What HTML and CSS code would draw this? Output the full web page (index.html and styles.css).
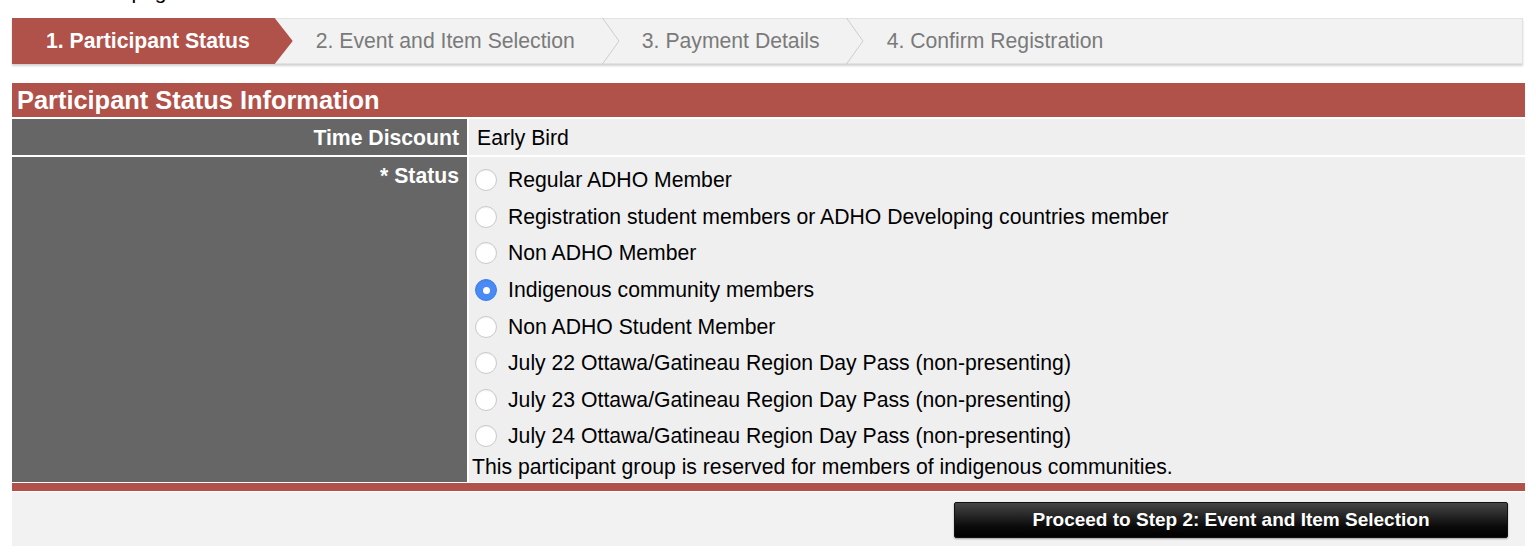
FILE: index.html
```html
<!DOCTYPE html>
<html>
<head>
<meta charset="utf-8">
<link rel="stylesheet" href="styles.css">
</head>
<body>
<div class="pretext"><div class="pretext-inner">this page</div></div>
<div class="wrap">
  <nav class="steps">
    <div class="step active">1. Participant Status</div>
    <div class="step s2">2. Event and Item Selection</div>
    <svg class="chev" viewBox="0 0 18 46" preserveAspectRatio="none"><polyline points="0.5,0 17,23 0.5,46" fill="none" stroke="#cdcdcd" stroke-width="1"/></svg>
    <div class="step s3">3. Payment Details</div>
    <svg class="chev" viewBox="0 0 18 46" preserveAspectRatio="none"><polyline points="0.5,0 17,23 0.5,46" fill="none" stroke="#cdcdcd" stroke-width="1"/></svg>
    <div class="step s4">4. Confirm Registration</div>
  </nav>

  <h2 class="section-title">Participant Status Information</h2>
  <div class="form">
    <div class="label">Time Discount</div>
    <div class="value">Early Bird</div>
    <div class="label label-top">* Status</div>
    <div class="value options">
      <label class="opt"><input type="radio" name="status"><span>Regular ADHO Member</span></label>
      <label class="opt"><input type="radio" name="status"><span>Registration student members or ADHO Developing countries member</span></label>
      <label class="opt"><input type="radio" name="status"><span>Non ADHO Member</span></label>
      <label class="opt"><input type="radio" name="status" checked><span>Indigenous community members</span></label>
      <label class="opt"><input type="radio" name="status"><span>Non ADHO Student Member</span></label>
      <label class="opt"><input type="radio" name="status"><span>July 22 Ottawa/Gatineau Region Day Pass (non-presenting)</span></label>
      <label class="opt"><input type="radio" name="status"><span>July 23 Ottawa/Gatineau Region Day Pass (non-presenting)</span></label>
      <label class="opt"><input type="radio" name="status"><span>July 24 Ottawa/Gatineau Region Day Pass (non-presenting)</span></label>
      <div class="note">This participant group is reserved for members of indigenous communities.</div>
    </div>
  </div>
  <div class="redbar"></div>
  <div class="footer">
    <button class="proceed" type="button">Proceed to Step 2: Event and Item Selection</button>
  </div>
</div>
</body>
</html>
```

FILE: styles.css
```css
* { box-sizing: border-box; }
html, body { margin: 0; padding: 0; background: #fff; }
body {
  font-family: "Liberation Sans", Arial, sans-serif;
  color: #000;
  font-size: 21.2px;
}
.pretext {
  height: 5px;
  overflow: hidden;
  padding-left: 93px;
}
.pretext-inner {
  margin-top: -20px;
  line-height: 24px;
  font-size: 21px;
}
.wrap {
  padding: 0 11px 0 12px;
}
.steps {
  margin-top: 13px;
  margin-right: 2px;
  height: 46px;
  display: flex;
  align-items: stretch;
  background: #f2f2f2;
  border: 1px solid #e2e2e2;
  box-shadow: 0 2px 2px rgba(0,0,0,0.18);
}
.step {
  display: flex;
  align-items: center;
  font-size: 21.2px;
  color: #7a7a7a;
  white-space: nowrap;
}
.step.active {
  background: #b0524a;
  color: #fff;
  font-weight: bold;
  padding: 0 43px 0 34px;
  margin: -1px 0 -1px -1px;
  clip-path: polygon(0 0, calc(100% - 18px) 0, 100% 50%, calc(100% - 18px) 100%, 0 100%);
}
.s2 { padding: 0 27px 0 23px; }
.s3 { padding: 0 26px 0 22px; }
.s4 { padding: 0 0 0 23px; }
.chev {
  width: 18px;
  height: 46px;
  flex: none;
  margin-top: -1px;
  margin-bottom: -1px;
}
.section-title {
  margin: 19px 0 0 0;
  height: 34px;
  background: #b0524a;
  color: #fff;
  font-size: 25.4px;
  font-weight: bold;
  line-height: 34px;
  padding-left: 5px;
}
.form {
  margin-top: 2px;
  display: grid;
  grid-template-columns: 455px 1fr;
  gap: 2px;
  background: #fff;
}
.label {
  background: #666666;
  color: #fff;
  font-weight: bold;
  text-align: right;
  padding: 7px 8px 5px 8px;
  line-height: 24px;
}
.label-top { padding-top: 7px; }
.value {
  background: #efefef;
  padding: 7px 8px 5px 8px;
  line-height: 24px;
}
.options {
  padding: 5px 0 3px 3px;
}
.opt {
  display: flex;
  align-items: center;
  height: 36.6px;
  padding-left: 3px;
}
.opt input {
  appearance: none;
  -webkit-appearance: none;
  margin: 0 11px 0 0;
  width: 22px;
  height: 22px;
  border-radius: 50%;
  border: 1px solid #c9c9c9;
  background: #fff;
  box-shadow: inset 0 1px 1px rgba(0,0,0,0.05);
  flex: none;
  position: relative;
}
.opt input:checked {
  background: #4a8af4;
  border-color: #3f7fe8;
}
.opt input:checked::after {
  content: "";
  position: absolute;
  left: 50%;
  top: 50%;
  width: 7px;
  height: 7px;
  margin: -3.5px 0 0 -3.5px;
  border-radius: 50%;
  background: #fff;
}
.note {
  line-height: 24px;
}
.redbar {
  margin-top: 1px;
  height: 8px;
  background: #b0524a;
}
.footer {
  margin-top: 1px;
  height: 54px;
  background: #f2f2f2;
  display: flex;
  justify-content: flex-end;
  align-items: flex-start;
  padding: 10px 17px 0 0;
}
.proceed {
  width: 554px;
  height: 36px;
  border: 1px solid #111;
  border-radius: 2px;
  background: linear-gradient(#464646, #0a0a0a 70%, #000);
  color: #fff;
  font-family: "Liberation Sans", Arial, sans-serif;
  font-weight: bold;
  font-size: 19px;
  box-shadow: 0 1px 2px rgba(0,0,0,0.35);
  padding: 0;
}
```
